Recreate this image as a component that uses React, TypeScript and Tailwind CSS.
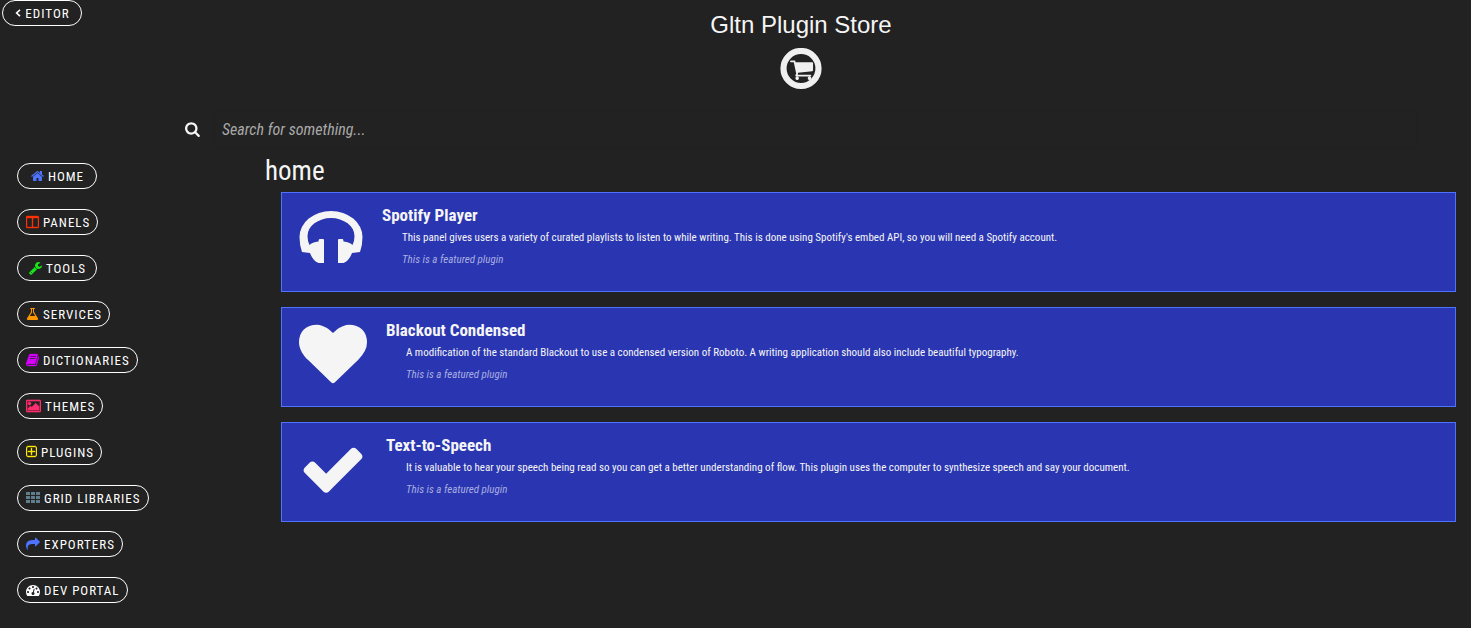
import React from "react";

type IconProps = { d: string; left?: number; width?: number; height?: number; stroke?: number; className?: string };

function Icon({ d, left = 0, width = 1792, height = 1792, stroke = 0, className = "" }: IconProps) {
  return (
    <svg
      viewBox={`${left} 0 ${width} ${height}`}
      fill="currentColor"
      stroke="currentColor"
      strokeWidth={stroke}
      aria-hidden="true"
      className={`shrink-0 ${className}`}
    >
      <path d={d} />
    </svg>
  );
}

const ICONS = {
  search:
    "M1216 832q0-185-131.5-316.5t-316.5-131.5-316.5 131.5-131.5 316.5 131.5 316.5 316.5 131.5 316.5-131.5 131.5-316.5zm512 832q0 52-38 90t-90 38q-54 0-90-38l-343-342q-179 124-399 124-143 0-273.5-55.5t-225-150-150-225-55.5-273.5 55.5-273.5 150-225 225-150 273.5-55.5 273.5 55.5 225 150 150 225 55.5 273.5q0 220-124 399l343 343q37 37 37 90z",
  home: "M1472 992v480q0 26-19 45t-45 19h-384v-384h-256v384h-384q-26 0-45-19t-19-45v-480q0-1 .5-3t.5-3l575-474 575 474q1 2 1 6zm223-69l-62 74q-8 9-21 11h-3q-13 0-21-7l-692-577-692 577q-12 8-24 7-13-2-21-11l-62-74q-8-10-7-23.5t11-21.5l719-599q32-26 76-26t76 26l244 204v-195q0-14 9-23t23-9h192q14 0 23 9t9 23v408l219 182q10 8 11 21.5t-7 23.5z",
  columns:
    "M224 1536h608v-1152h-640v1120q0 13 9.5 22.5t22.5 9.5zm1376-32v-1120h-640v1152h608q13 0 22.5-9.5t9.5-22.5zm128-1216v1216q0 66-47 113t-113 47h-1344q-66 0-113-47t-47-113v-1216q0-66 47-113t113-47h1344q66 0 113 47t47 113z",
  wrench:
    "M448 1472q0-26-19-45t-45-19-45 19-19 45 19 45 45 19 45-19 19-45zm644-420l-682 682q-37 37-90 37-52 0-91-37l-106-108q-38-36-38-90 0-53 38-91l681-681q39 98 114.5 173.5t173.5 114.5zm634-435q0 39-23 106-47 134-164.5 217.5t-258.5 83.5q-185 0-316.5-131.5t-131.5-316.5 131.5-316.5 316.5-131.5q58 0 121.5 16.5t107.5 46.5q16 11 16 28t-16 28l-293 169v224l193 107q5-3 79-48.5t135.5-81 70.5-35.5q15 0 23.5 10t8.5 25z",
  flask:
    "M1591 1448q56 89 21.5 152.5t-140.5 63.5h-1152q-106 0-140.5-63.5t21.5-152.5l503-793v-399h-64q-26 0-45-19t-19-45 19-45 45-19h512q26 0 45 19t19 45-19 45-45 19h-64v399zm-779-725l-272 429h712l-272-429-20-31v-436h-128v436z",
  book: "M1703 478q40 57 18 129l-275 906q-19 64-76.5 107.5t-122.5 43.5h-923q-77 0-148.5-53.5t-99.5-131.5q-24-67-2-127 0-4 3-27t4-37q1-8-3-21.5t-3-19.5q2-11 8-21t16.5-23.5 16.5-23.5q23-38 45-91.5t30-91.5q3-10 .5-30t-.5-28q3-11 17-28t17-23q21-36 42-92t25-90q1-9-2.5-32t.5-28q4-13 22-30.5t22-22.5q19-26 42.5-84.5t27.5-96.5q1-8-3-25.5t-2-26.5q2-8 9-18t18-23 17-21q8-12 16.5-30.5t15-35 16-36 19.5-32 26.5-23.5 36-11.5 47.5 5.5l-1 3q38-9 51-9h761q74 0 114 56t18 130l-274 906q-36 119-71.5 153.5t-128.5 34.5h-869q-27 0-38 15-11 16-1 43 24 70 144 70h923q29 0 56-15.5t35-41.5l300-987q7-22 5-57 38 15 59 43zm-1064 2q-4 13 2 22.5t20 9.5h608q13 0 25.5-9.5t16.5-22.5l21-64q4-13-2-22.5t-20-9.5h-608q-13 0-25.5 9.5t-16.5 22.5zm-83 256q-4 13 2 22.5t20 9.5h608q13 0 25.5-9.5t16.5-22.5l21-64q4-13-2-22.5t-20-9.5h-608q-13 0-25.5 9.5t-16.5 22.5z",
  image:
    "M576 576q0 80-56 136t-136 56-136-56-56-136 56-136 136-56 136 56 56 136zm1024 384v448h-1408v-192l320-320 160 160 512-512zm96-704h-1600q-13 0-22.5 9.5t-9.5 22.5v1216q0 13 9.5 22.5t22.5 9.5h1600q13 0 22.5-9.5t9.5-22.5v-1216q0-13-9.5-22.5t-22.5-9.5zm160 32v1216q0 66-47 113t-113 47h-1600q-66 0-113-47t-47-113v-1216q0-66 47-113t113-47h1600q66 0 113 47t47 113z",
  plus: "M1344 800v64q0 14-9 23t-23 9h-352v352q0 14-9 23t-23 9h-64q-14 0-23-9t-9-23v-352h-352q-14 0-23-9t-9-23v-64q0-14 9-23t23-9h352v-352q0-14 9-23t23-9h64q14 0 23 9t9 23v352h352q14 0 23 9t9 23zm128 448v-832q0-66-47-113t-113-47h-832q-66 0-113 47t-47 113v832q0 66 47 113t113 47h832q66 0 113-47t47-113zm128-832v832q0 119-84.5 203.5t-203.5 84.5h-832q-119 0-203.5-84.5t-84.5-203.5v-832q0-119 84.5-203.5t203.5-84.5h832q119 0 203.5 84.5t84.5 203.5z",
  grid: "M0 128h512v384h-512zM640 128h512v384h-512zM1280 128h512v384h-512zM0 640h512v384h-512zM640 640h512v384h-512zM1280 640h512v384h-512zM0 1152h512v384h-512zM640 1152h512v384h-512zM1280 1152h512v384h-512z",
  share:
    "M1792 640q0 26-19 45l-512 512q-19 19-45 19t-45-19-19-45v-256h-224q-98 0-175.5 6t-154 21.5-133 42.5-105.5 69.5-80 101-48.5 138.5-17.5 181q0 55 5 123 0 6 2.5 23.5t2.5 26.5q0 15-8.5 25t-23.5 10q-16 0-28-17-7-9-13-22t-13.5-30-10.5-24q-127-285-127-451 0-199 53-333 162-403 875-403h224v-256q0-26 19-45t45-19 45 19l512 512q19 19 19 45z",
  gauge:
    "M384 1152q0-53-37.5-90.5t-90.5-37.5-90.5 37.5-37.5 90.5 37.5 90.5 90.5 37.5 90.5-37.5 37.5-90.5zm192-448q0-53-37.5-90.5t-90.5-37.5-90.5 37.5-37.5 90.5 37.5 90.5 90.5 37.5 90.5-37.5 37.5-90.5zm428 481l101-382q6-26-7.5-48.5t-38.5-29.5-48 6.5-30 39.5l-101 382q-60 5-107 43.5t-63 98.5q-20 77 20 146t117 89 146-20 89-117q16-60-6-117t-72-91zm660-33q0-53-37.5-90.5t-90.5-37.5-90.5 37.5-37.5 90.5 37.5 90.5 90.5 37.5 90.5-37.5 37.5-90.5zm-640-640q0-53-37.5-90.5t-90.5-37.5-90.5 37.5-37.5 90.5 37.5 90.5 90.5 37.5 90.5-37.5 37.5-90.5zm448 192q0-53-37.5-90.5t-90.5-37.5-90.5 37.5-37.5 90.5 37.5 90.5 90.5 37.5 90.5-37.5 37.5-90.5zm320 448q0 261-141 483-19 29-54 29h-1402q-35 0-54-29-141-221-141-483 0-182 71-348t191-286 286-191 348-71 348 71 286 191 191 286 71 348z",
  cart: "M704 1536q0 52-38 90t-90 38-90-38-38-90 38-90 90-38 90 38 38 90zm896 0q0 52-38 90t-90 38-90-38-38-90 38-90 90-38 90 38 38 90zm128-1088v512q0 24-16.5 42.5t-40.5 21.5l-1044 122q13 60 13 70 0 16-24 64h920q26 0 45 19t19 45-19 45-45 19h-1024q-26 0-45-19t-19-45q0-11 8-31.5t16-36 21.5-40 15.5-29.5l-177-823h-204q-26 0-45-19t-19-45 19-45 45-19h256q16 0 28.5 6.5t19.5 15.5 13 24.5 8 26 5.5 29.5 4.5 26h1201q26 0 45 19t19 45z",
  headphones:
    "M3 47Q.5 40 .5 32A31.5 26 0 0 1 63.5 32Q63.5 40 61 47L53 48Q50 56 44.5 58H39V35Q39 34 40 34H43.5Q44.5 34 44.5 36.5Q51 37 53.5 40Q55.5 36 55.5 31A23.5 18 0 0 0 8.5 31Q8.5 36 10.5 40Q13 37 19.5 36.5Q19.5 34 20.5 34H24Q25 34 25 35V58H19.5Q14 56 11 48Z",
  heart:
    "M896 1664q-26 0-44-18l-624-602q-10-8-27.5-26t-55.5-65.5-68-97.5-53.5-121-23.5-138q0-220 127-344t351-124q62 0 126.5 21.5t120 58 95.5 68.5 76 68q36-36 76-68t95.5-68.5 120-58 126.5-21.5q224 0 351 124t127 344q0 221-229 450l-623 600q-18 18-44 18z",
  check:
    "M1671 566q0 40-28 68l-724 724-136 136q-28 28-68 28t-68-28l-136-136-362-362q-28-28-28-68t28-68l136-136q28-28 68-28t68 28l294 295 656-657q28-28 68-28t68 28l136 136q28 28 28 68z",
};

const NAV = [
  { label: "Home", d: ICONS.home, left: 64, width: 1664, stroke: 0, color: "w-[13px] text-[#4d73ff]" },
  { label: "Panels", d: ICONS.columns, left: 64, width: 1664, stroke: 50, color: "w-[13px] text-[#ff3000]" },
  { label: "Tools", d: ICONS.wrench, left: 64, width: 1664, stroke: 0, color: "w-[13px] text-[#14e715]" },
  { label: "Services", d: ICONS.flask, left: 64, width: 1664, stroke: 0, color: "w-[13px] text-[#ff9800]" },
  { label: "Dictionaries", d: ICONS.book, left: 64, width: 1664, stroke: 40, color: "w-[13px] text-[#d500f9]" },
  { label: "Themes", d: ICONS.image, left: -64, width: 1920, stroke: 80, color: "w-[15px] text-[#ff2d6f]" },
  { label: "Plugins", d: ICONS.plus, left: 192, width: 1408, stroke: 50, color: "w-[11px] text-[#ffea00]" },
  { label: "Grid Libraries", d: ICONS.grid, left: 0, width: 1792, stroke: 0, color: "w-[14px] text-[#607d8b]" },
  { label: "Exporters", d: ICONS.share, left: 0, width: 1792, stroke: 0, color: "w-[14px] text-[#4d73ff]" },
  { label: "Dev Portal", d: ICONS.gauge, left: 0, width: 1792, stroke: 0, color: "w-[14px] text-white" },
];

const PLUGINS = [
  {
    name: "Spotify Player",
    text: "This panel gives users a variety of curated playlists to listen to while writing. This is done using Spotify's embed API, so you will need a Spotify account.",
    d: ICONS.headphones,
    width: 64,
    height: 68,
    size: "w-16",
  },
  {
    name: "Blackout Condensed",
    text: "A modification of the standard Blackout to use a condensed version of Roboto. A writing application should also include beautiful typography.",
    d: ICONS.heart,
    width: 1792,
    height: 1792,
    size: "w-[68px]",
  },
  {
    name: "Text-to-Speech",
    text: "It is valuable to hear your speech being read so you can get a better understanding of flow. This plugin uses the computer to synthesize speech and say your document.",
    d: ICONS.check,
    width: 1792,
    height: 1792,
    size: "w-[68px]",
  },
];

const PILL =
  "flex h-[26px] min-w-20 items-center justify-center gap-1 rounded-full border border-white pr-[7px] pl-2 text-[13px] leading-none tracking-[1px] text-white uppercase";

export default function App() {
  return (
    <div className="min-h-screen bg-[#222222] font-['Roboto_Condensed','Roboto',sans-serif] text-[#f5f5f5]">
      <header className="grid grid-cols-[131px_1fr] items-start">
        <div className="flex pl-0.5">
          <button type="button" className={PILL}>
            <svg viewBox="0 0 6 8" fill="none" stroke="currentColor" strokeWidth="1.6" aria-hidden="true" className="h-2 w-1.5">
              <path d="M5 .8 1.6 4 5 7.2" />
            </svg>
            Editor
          </button>
        </div>
        <div className="flex flex-col items-center pt-[9px]">
          <h1 className="font-['Liberation_Sans',Arial,sans-serif] text-2xl">Gltn Plugin Store</h1>
          <svg viewBox="0 0 42 42" aria-hidden="true" className="mt-[7px] size-[42px] text-[#f0f0f0]">
            <circle cx="21" cy="20.5" r="17.5" fill="none" stroke="currentColor" strokeWidth="6.2" />
            <path d={ICONS.cart} fill="currentColor" transform="translate(9.2 9) scale(.0138)" />
          </svg>
        </div>
      </header>

      <form role="search" className="mt-5 mr-[54px] ml-[185px] flex items-center" onSubmit={(e) => e.preventDefault()}>
        <label htmlFor="query" aria-label="Search" className="w-[29px]">
          <Icon d={ICONS.search} left={64} width={1664} className="h-4" />
        </label>
        <input
          id="query"
          type="text"
          aria-label="Search"
          placeholder="Search for something..."
          className="h-[38px] min-w-0 flex-1 border border-[#202020] bg-transparent px-[7px] text-base text-[#f5f5f5] outline-none placeholder:text-[#a9a9a9] placeholder:italic"
        />
      </form>

      <div className="flex items-start">
        <nav className="flex w-[265px] shrink-0 flex-col items-start gap-5 pt-[15px] pb-6 pl-[17px]">
          {NAV.map((item) => (
            <button key={item.label} type="button" className={PILL}>
              <Icon d={item.d} left={item.left} width={item.width} stroke={item.stroke} className={`h-3.5 ${item.color}`} />
              {item.label}
            </button>
          ))}
        </nav>

        <main className="min-w-0 flex-1 pt-[5px] pr-[15px]">
          <h2 className="text-[27px] leading-9">home</h2>
          <div className="mt-[3px] flex flex-col gap-[15px] pl-4">
            {PLUGINS.map((plugin) => (
              <article key={plugin.name} className="flex h-[100px] items-start border border-[#4d73ff] bg-[#2a36b1] pt-3 pl-[17px]">
                <Icon d={plugin.d} width={plugin.width} height={plugin.height} className={`h-[68px] ${plugin.size}`} />
                <div className="-mt-px pl-[19px]">
                  <h3 className="text-[17px] leading-[22px] font-bold">{plugin.name}</h3>
                  <p className="mt-px pl-5 text-[11px] leading-[22px]">{plugin.text}</p>
                  <p className="pl-5 text-[11px] leading-[22px] text-[#a9aee0] italic">This is a featured plugin</p>
                </div>
              </article>
            ))}
          </div>
        </main>
      </div>
    </div>
  );
}
